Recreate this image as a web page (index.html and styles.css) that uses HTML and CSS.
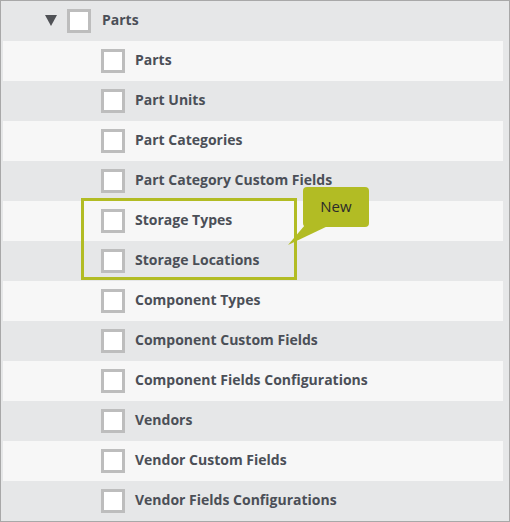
FILE: index.html
```html
<!DOCTYPE html>
<html lang="en">
<head>
    <meta charset="UTF-8">
    <meta name="viewport" content="width=device-width, initial-scale=1.0">
    <title>Permissions</title>
    <link rel="stylesheet" href="styles.css">
</head>
<body>
    <div class="tree">
        <div class="row group">
            <span class="toggle"></span>
            <span class="check"></span>
            <span class="label">Parts</span>
        </div>
        <ul class="children">
            <li class="row"><span class="check"></span><span class="label">Parts</span></li>
            <li class="row"><span class="check"></span><span class="label">Part Units</span></li>
            <li class="row"><span class="check"></span><span class="label">Part Categories</span></li>
            <li class="row"><span class="check"></span><span class="label">Part Category Custom Fields</span></li>
            <li class="row"><span class="check"></span><span class="label">Storage Types</span></li>
            <li class="row"><span class="check"></span><span class="label">Storage Locations</span></li>
            <li class="row"><span class="check"></span><span class="label">Component Types</span></li>
            <li class="row"><span class="check"></span><span class="label">Component Custom Fields</span></li>
            <li class="row"><span class="check"></span><span class="label">Component Fields Configurations</span></li>
            <li class="row"><span class="check"></span><span class="label">Vendors</span></li>
            <li class="row"><span class="check"></span><span class="label">Vendor Custom Fields</span></li>
            <li class="row"><span class="check"></span><span class="label">Vendor Fields Configurations</span></li>
        </ul>

        <!-- highlight around the new storage items -->
        <div class="highlight"></div>
        <div class="callout">New</div>
    </div>
</body>
</html>
```

FILE: styles.css
```css
body {
    margin: 0;
    font-family: "Open Sans", "Liberation Sans", Arial, sans-serif;
    color: #4b4f57;
}
.tree {
    position: relative;
    width: 508px;
    border: 1px solid #a8a8a8;
    background-color: #e6e7e8;
}
.children {
    list-style: none;
    margin: 0;
    padding: 0;
}
.row {
    display: flex;
    align-items: center;
    height: 40px;
    margin: 0 6px 0 2px;
    padding-left: 98px;
    font-size: 14px;
    font-weight: 700;
}
.label {
    margin-top: -3px;
}
.children .row:nth-child(odd) {
    background-color: #f7f7f7;
}
.row.group {
    padding-left: 42px;
}
.toggle {
    width: 0;
    height: 0;
    border-left: 6px solid transparent;
    border-right: 6px solid transparent;
    border-top: 11px solid #505256;
    margin-right: 10px;
    margin-top: -1px;
}
.check {
    box-sizing: border-box;
    width: 24px;
    height: 24px;
    border: 3px solid #bdbdbd;
    background-color: white;
    margin-right: 10px;
}
.group .check {
    margin-right: 11px;
}
.highlight {
    position: absolute;
    left: 80px;
    top: 197px;
    box-sizing: border-box;
    width: 216px;
    height: 82px;
    border: 3px solid #b2bc24;
}
.callout {
    position: absolute;
    left: 302px;
    top: 186px;
    width: 66px;
    height: 40px;
    line-height: 38px;
    text-align: center;
    font-size: 15px;
    color: #2b2b2b;
    background-color: #b2bc24;
    border-radius: 4px;
}
.callout::after {
    content: "";
    position: absolute;
    left: -16px;
    top: 38px;
    width: 44px;
    height: 21px;
    background-color: #b2bc24;
    clip-path: polygon(18px 0, 43px 0, 1px 20px);
}
```
